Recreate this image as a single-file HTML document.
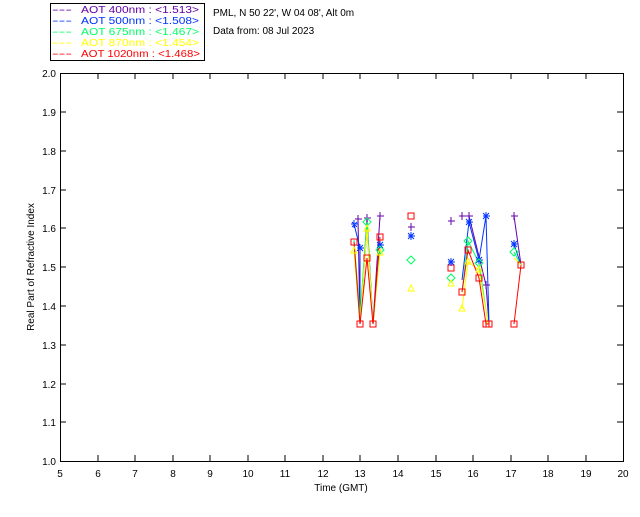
<!DOCTYPE html>
<html><head><style>
body{margin:0;background:#fff;width:640px;height:512px;overflow:hidden;font-family:"Liberation Sans",sans-serif}
svg text{font-family:"Liberation Sans",sans-serif;font-size:10px}
</style></head><body>
<svg width="640" height="512" xmlns="http://www.w3.org/2000/svg">
<rect x="50.5" y="3.5" width="154" height="57" fill="none" stroke="#000"/>
<g font-size="10">
<g fill="#6600aa"><text x="52" y="13" textLength="20" lengthAdjust="spacingAndGlyphs">---</text><text x="81" y="13" textLength="118" lengthAdjust="spacingAndGlyphs">AOT  400nm : &lt;1.513&gt;</text></g>
<g fill="#0033ff"><text x="52" y="24" textLength="20" lengthAdjust="spacingAndGlyphs">---</text><text x="81" y="24" textLength="118" lengthAdjust="spacingAndGlyphs">AOT  500nm : &lt;1.508&gt;</text></g>
<g fill="#00ff66"><text x="52" y="35" textLength="20" lengthAdjust="spacingAndGlyphs">---</text><text x="81" y="35" textLength="118" lengthAdjust="spacingAndGlyphs">AOT  675nm : &lt;1.467&gt;</text></g>
<g fill="#ffff00"><text x="52" y="46" textLength="20" lengthAdjust="spacingAndGlyphs">---</text><text x="81" y="46" textLength="118" lengthAdjust="spacingAndGlyphs">AOT  870nm : &lt;1.454&gt;</text></g>
<g fill="#ff0000"><text x="52" y="57" textLength="20" lengthAdjust="spacingAndGlyphs">---</text><text x="81" y="57" textLength="119" lengthAdjust="spacingAndGlyphs">AOT 1020nm : &lt;1.468&gt;</text></g>
<text x="213" y="16" fill="#000">PML, N 50 22', W 04 08', Alt 0m</text>
<text x="213" y="34" fill="#000">Data from: 08 Jul 2023</text>
</g>
<rect x="60.5" y="73.5" width="563" height="388" fill="none" stroke="#000"/>
<g stroke="#000">
<path d="M98 73v6M135 73v6M173 73v6M210 73v6M248 73v6M285 73v6M323 73v6M360 73v6M398 73v6M436 73v6M473 73v6M511 73v6M548 73v6M586 73v6
M98 461v-6M135 461v-6M173 461v-6M210 461v-6M248 461v-6M285 461v-6M323 461v-6M360 461v-6M398 461v-6M436 461v-6M473 461v-6M511 461v-6M548 461v-6M586 461v-6
M60 112h6M60 151h6M60 190h6M60 228h6M60 267h6M60 306h6M60 345h6M60 384h6M60 422h6
M623 112h-6M623 151h-6M623 190h-6M623 228h-6M623 267h-6M623 306h-6M623 345h-6M623 384h-6M623 422h-6"/>
</g>
<g fill="#000" text-anchor="end">
<text x="56" y="77">2.0</text><text x="56" y="116">1.9</text><text x="56" y="155">1.8</text><text x="56" y="194">1.7</text><text x="56" y="232">1.6</text><text x="56" y="271">1.5</text><text x="56" y="310">1.4</text><text x="56" y="349">1.3</text><text x="56" y="388">1.2</text><text x="56" y="426">1.1</text><text x="56" y="465">1.0</text>
</g>
<g fill="#000" text-anchor="middle">
<text x="60" y="477">5</text><text x="98" y="477">6</text><text x="135" y="477">7</text><text x="173" y="477">8</text><text x="210" y="477">9</text><text x="248" y="477">10</text><text x="285" y="477">11</text><text x="323" y="477">12</text><text x="360" y="477">13</text><text x="398" y="477">14</text><text x="436" y="477">15</text><text x="473" y="477">16</text><text x="511" y="477">17</text><text x="548" y="477">18</text><text x="586" y="477">19</text><text x="623" y="477">20</text>
<text x="341" y="491">Time (GMT)</text>
<text transform="translate(34,267) rotate(-90)">Real Part of Refractive Index</text>
</g>
<g fill="none" stroke-width="1">
<polyline stroke="#6600aa" points="358,219 360,324 367,218 373,324 380,216"/>
<polyline stroke="#6600aa" points="462,216 469,216 486,285 489,324"/>
<polyline stroke="#6600aa" points="514,216 521,265"/>
<polyline stroke="#0033ff" points="354,224 360,248 360,324 367,228 373,324 380,245"/>
<polyline stroke="#0033ff" points="462,280 469,222 479,260 486,216 489,324"/>
<polyline stroke="#0033ff" points="514,244 521,265"/>
<polyline stroke="#00ff66" points="354,240 360,315 367,222 373,324 380,250"/>
<polyline stroke="#00ff66" points="462,292 468,241 479,263 488,324"/>
<polyline stroke="#00ff66" points="514,252 521,265"/>
<polyline stroke="#ffff00" points="354,251 360,324 367,229 373,324 380,253"/>
<polyline stroke="#ffff00" points="462,309 468,262 479,270 488,324"/>
<polyline stroke="#ffff00" points="514,258 521,265"/>
<polyline stroke="#ff0000" points="354,242 360,324 367,258 373,324 380,237"/>
<polyline stroke="#ff0000" points="462,292 468,250 479,278 486,324 489,324"/>
<polyline stroke="#ff0000" points="514,324 521,265"/>
</g>
<g fill="none" stroke="#ff0000">
<rect x="351" y="239" width="6" height="6"/><rect x="357" y="321" width="6" height="6"/><rect x="364" y="255" width="6" height="6"/><rect x="370" y="321" width="6" height="6"/><rect x="377" y="234" width="6" height="6"/>
<rect x="408" y="213" width="6" height="6"/><rect x="448" y="265" width="6" height="6"/><rect x="459" y="289" width="6" height="6"/><rect x="465" y="247" width="6" height="6"/><rect x="476" y="275" width="6" height="6"/><rect x="483" y="321" width="6" height="6"/><rect x="486" y="321" width="6" height="6"/><rect x="511" y="321" width="6" height="6"/><rect x="518" y="262" width="6" height="6"/>
</g>
<g stroke="#6600aa">
<path d="M355 219h7M358 215v8M364 218h7M367 214v8M377 216h7M380 212v8M408 227h7M411 223v8M448 221h7M451 217v8M459 216h7M462 212v8M466 216h7M469 212v8M483 285h7M486 281v8M511 216h7M514 212v8"/>
</g>
<g stroke="#0033ff">
<path d="M351 224h7M354 220v8M352 222l5 5M357 222l-5 5 M357 248h7M360 244v8M357 245l6 6M363 245l-6 6 M377 245h7M380 241v8M377 242l6 6M383 242l-6 6 M408 236h7M411 232v8M408 233l6 6M414 233l-6 6 M448 262h7M451 258v8M448 259l6 6M454 259l-6 6 M466 222h7M469 218v8M466 219l6 6M472 219l-6 6 M476 260h7M479 256v8M476 257l6 6M482 257l-6 6 M483 216h7M486 212v8M483 213l6 6M489 213l-6 6 M511 244h7M514 240v8M511 241l6 6M517 241l-6 6"/>
</g>
<g fill="none" stroke="#00ff66">
<path d="M367 218l4 4-4 4-4-4zM380 246l4 4-4 4-4-4zM411 256l4 4-4 4-4-4zM451 274l4 4-4 4-4-4zM468 237l4 4-4 4-4-4zM479 259l4 4-4 4-4-4zM514 248l4 4-4 4-4-4z"/>
</g>
<g fill="none" stroke="#ffff00">
<path d="M354 247l3 6h-6zM367 225l3 6h-6zM380 249l3 6h-6zM411 285l3 6h-6zM451 280l3 6h-6zM462 305l3 6h-6zM468 258l3 6h-6zM479 266l3 6h-6z"/>
</g>
</svg>
</body></html>
